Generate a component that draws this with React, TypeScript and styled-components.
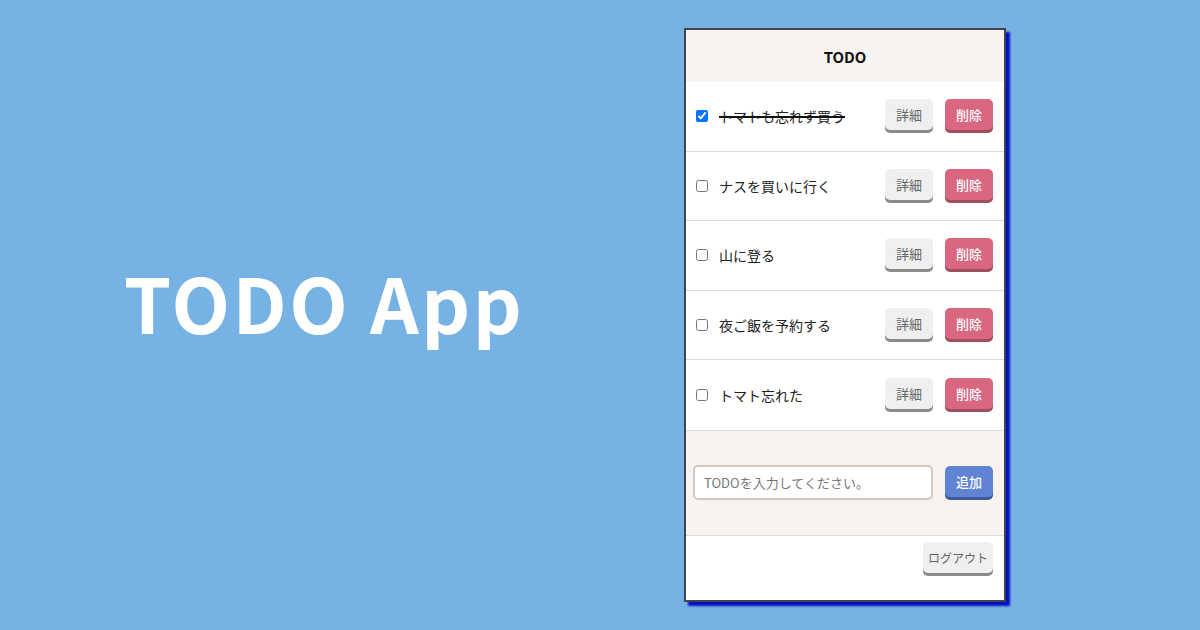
import React, { useState } from 'react';
import styled, { createGlobalStyle } from 'styled-components';

const GlobalStyle = createGlobalStyle`
  html, body {
    margin: 0;
    padding: 0;
  }
  body {
    background: #76b3e4;
    font-family: "Noto Sans CJK JP", "Noto Sans", sans-serif;
  }
`;

const Page = styled.div`
  width: 1200px;
  height: 630px;
  display: flex;
  align-items: center;
`;

const Hero = styled.div`
  flex: 0 0 648px;
  display: flex;
  justify-content: center;
`;

const HeroTitle = styled.h1`
  margin: 0 0 28px;
  color: #fff;
  font-size: 76px;
  font-weight: 700;
  letter-spacing: 2.5px;
`;

const Card = styled.div`
  margin-left: 36px;
  width: 322px;
  height: 574px;
  box-sizing: border-box;
  border: 2px solid #3c4550;
  background: #fff;
  box-shadow: 4px 4px 2px #0610c0;
  display: flex;
  flex-direction: column;
`;

const Header = styled.div`
  height: 52px;
  display: flex;
  align-items: center;
  justify-content: center;
  background: #f8f3ee;
  font-size: 15px;
  font-weight: 700;
  color: #111;
`;

const List = styled.ul`
  margin: 0;
  padding: 0;
  list-style: none;
`;

const Row = styled.li`
  height: 69.6px;
  box-sizing: border-box;
  border-bottom: 1px solid #dcdcdc;
  display: flex;
  align-items: center;
  padding: 0 11px 0 10px;
  &:last-child {
    border-bottom: none;
  }
`;

const Check = styled.input`
  margin: 0;
  width: 12px;
  height: 12px;
`;

const Label = styled.span<{ $done: boolean }>`
  flex: 1;
  margin-left: 11px;
  font-size: 14px;
  color: #222;
  text-decoration: ${(p) => (p.$done ? 'line-through' : 'none')};
  text-decoration-color: #111;
  text-decoration-thickness: 1.5px;
`;

type Tone = 'plain' | 'danger' | 'primary';

const toneBg: Record<Tone, string> = {
  plain: '#efefef',
  danger: '#d9677f',
  primary: '#6183d4',
};
const toneShadow: Record<Tone, string> = {
  plain: '#8a8a8a',
  danger: '#a04d5e',
  primary: '#3e5a9c',
};

const Button = styled.button<{ $tone: Tone; $wide?: boolean }>`
  height: 31px;
  min-width: 48px;
  padding: 0 ${(p) => (p.$wide ? 5 : 9)}px;
  margin-bottom: 3px;
  border: none;
  border-radius: 5px;
  font-family: inherit;
  font-size: ${(p) => (p.$wide ? 12 : 13)}px;
  font-weight: ${(p) => (p.$tone === 'plain' ? 400 : 500)};
  color: ${(p) => (p.$tone === 'plain' ? '#666' : '#fff')};
  background: ${(p) => toneBg[p.$tone]};
  box-shadow: 0 3px 0 ${(p) => toneShadow[p.$tone]};
  cursor: pointer;
`;

const Actions = styled.div`
  display: flex;
  gap: 12px;
`;

const Form = styled.div`
  flex: 0 0 106px;
  box-sizing: border-box;
  border-top: 1px solid #dcdcdc;
  border-bottom: 1px solid #dcdcdc;
  background: #f8f3ee;
  display: flex;
  align-items: center;
  gap: 12px;
  padding: 0 11px 0 7px;
`;

const Input = styled.input`
  width: 240px;
  height: 35px;
  box-sizing: border-box;
  border: 2px solid #cfcac6;
  border-radius: 5px;
  padding: 0 9px;
  font-family: inherit;
  font-size: 13px;
  color: #333;
  background: #fff;
  &::placeholder {
    color: #777;
  }
`;

const Footer = styled.div`
  flex: 1;
  display: flex;
  justify-content: flex-end;
  align-items: flex-start;
  padding: 6px 11px 0 0;
`;

const initial = [
  { id: 1, title: 'トマトも忘れず買う', done: true },
  { id: 2, title: 'ナスを買いに行く', done: false },
  { id: 3, title: '山に登る', done: false },
  { id: 4, title: '夜ご飯を予約する', done: false },
  { id: 5, title: 'トマト忘れた', done: false },
];

function App() {
  const [todos, setTodos] = useState(initial);
  const [text, setText] = useState('');

  const toggle = (id: number) =>
    setTodos((list) => list.map((t) => (t.id === id ? { ...t, done: !t.done } : t)));

  return (
    <Page>
      <GlobalStyle />
      <Hero>
        <HeroTitle>TODO App</HeroTitle>
      </Hero>
      <Card>
        <Header>TODO</Header>
        <List>
          {todos.map((todo) => (
            <Row key={todo.id}>
              <Check type="checkbox" checked={todo.done} onChange={() => toggle(todo.id)} />
              <Label $done={todo.done}>{todo.title}</Label>
              <Actions>
                <Button $tone="plain">詳細</Button>
                <Button $tone="danger">削除</Button>
              </Actions>
            </Row>
          ))}
        </List>
        <Form>
          <Input placeholder="TODOを入力してください。" value={text} onChange={(e) => setText(e.target.value)} />
          <Button $tone="primary">追加</Button>
        </Form>
        <Footer>
          <Button $tone="plain" $wide>
            ログアウト
          </Button>
        </Footer>
      </Card>
    </Page>
  );
}

export default App;
